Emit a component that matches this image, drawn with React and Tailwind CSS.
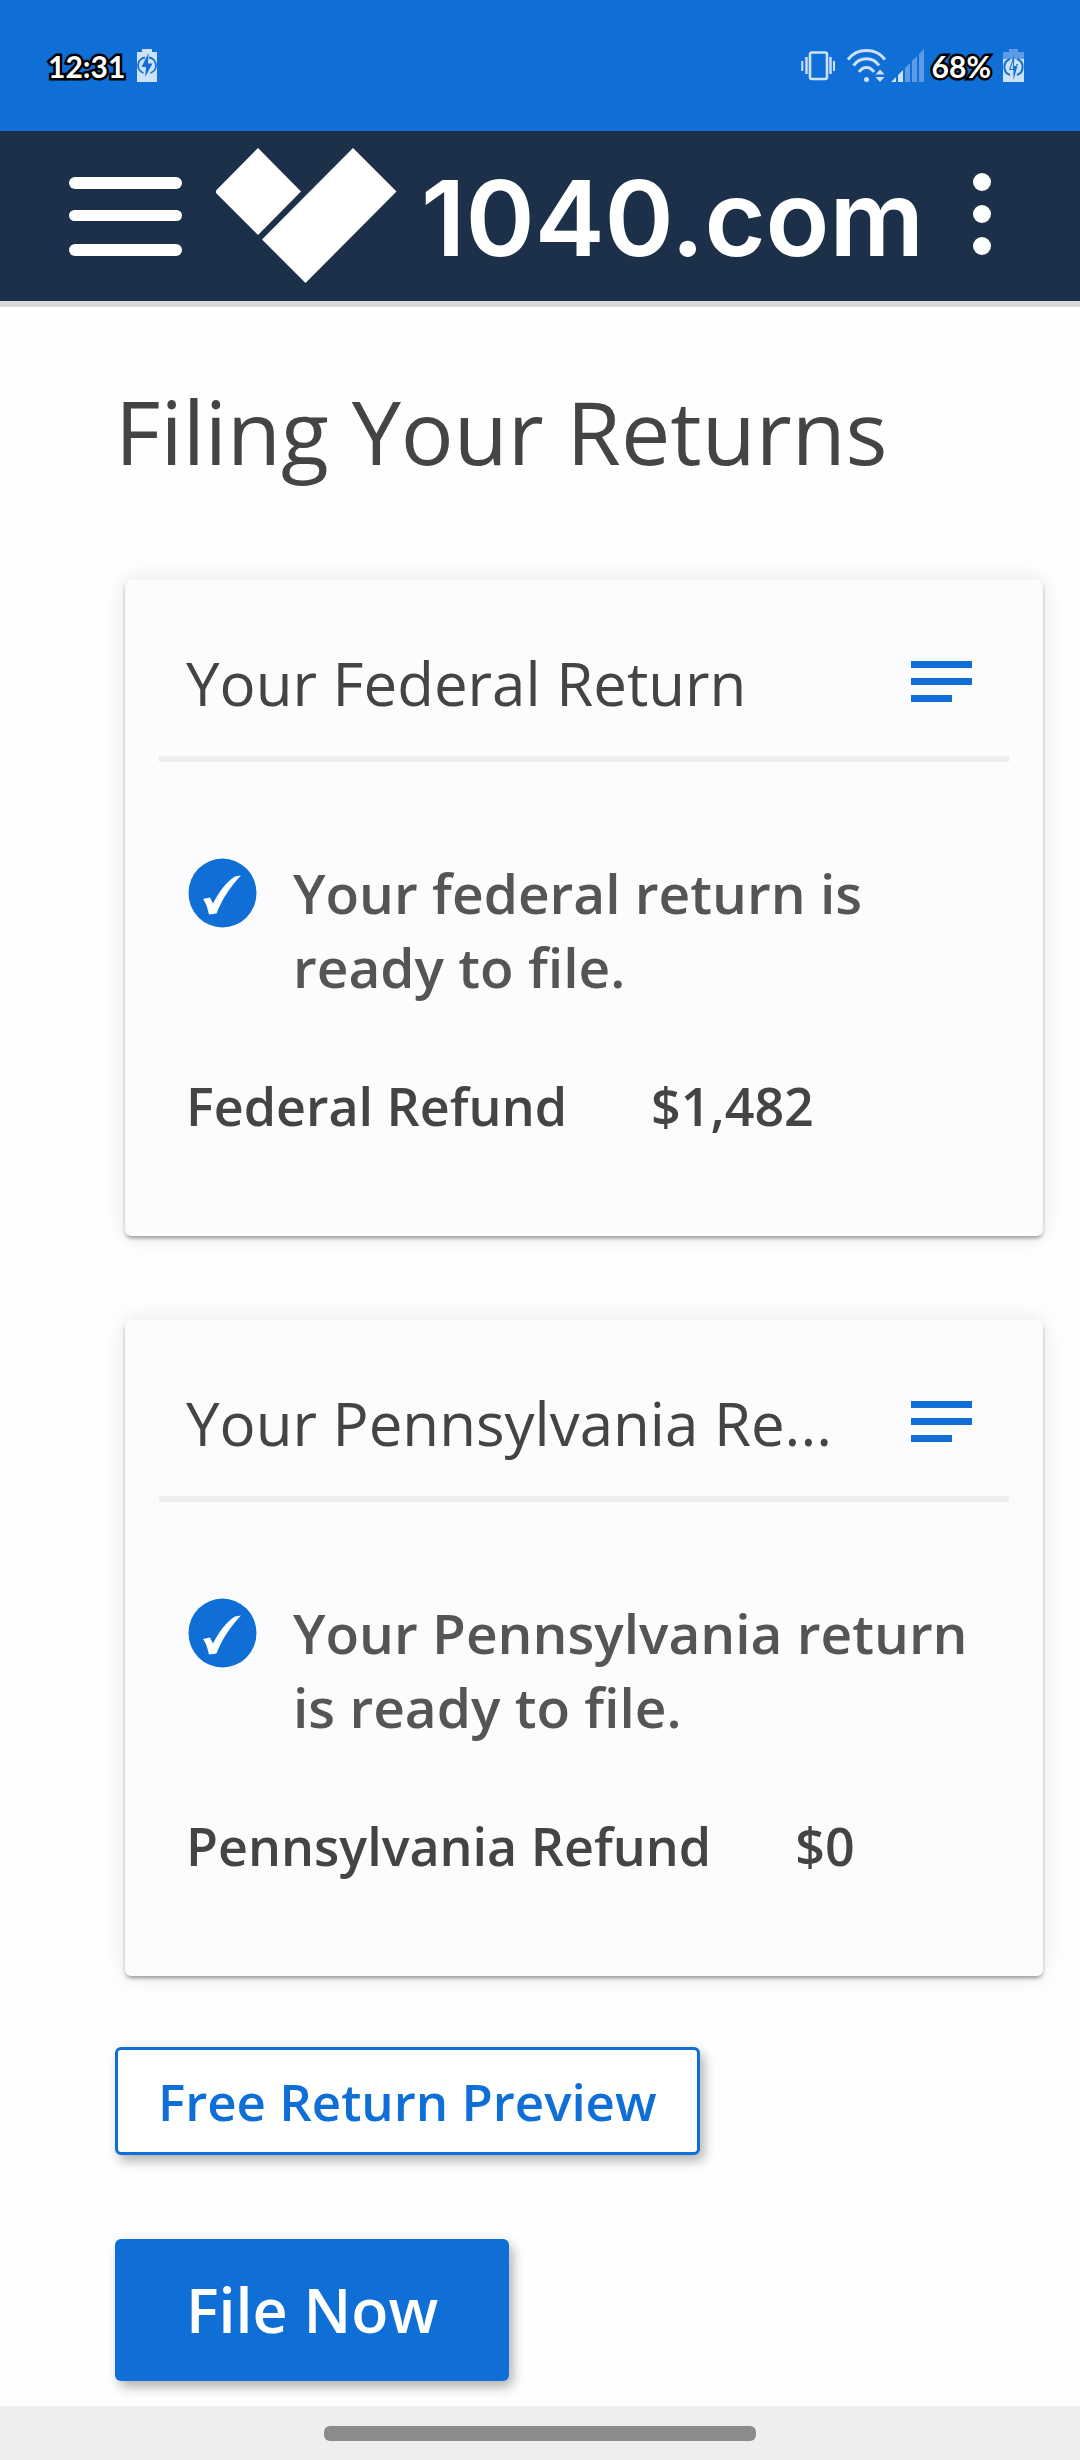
import React from 'react';

const returns = [
  {
    id: 'federal',
    title: 'Your Federal Return',
    message: 'Your federal return is ready to file.',
    label: 'Federal Refund',
    amount: '$1,482',
  },
  {
    id: 'pennsylvania',
    title: 'Your Pennsylvania Re...',
    message: 'Your Pennsylvania return is ready to file.',
    label: 'Pennsylvania Refund',
    amount: '$0',
  },
];

function ChargingIcon() {
  return (
    <svg className="w-5 h-[33px]" viewBox="0 0 20 33" aria-hidden="true">
      <path d="M5 0h10v3h5v30H0V3h5z" fill="#cfe1f7" />
      <path d="M8 8.500A8 8 0 0 0 6.500 24M12 8.500A8 8 0 0 1 13.500 24" fill="none" stroke="#0f6fd7" strokeWidth="1.800" />
      <path d="M11.500 4 4.500 18h4.500l-.8 10L15.500 14.500H11z" fill="#0f6fd7" />
    </svg>
  );
}

function BatteryIcon() {
  return (
    <svg className="w-[21px] h-[33px]" viewBox="0 0 21 33" aria-hidden="true">
      <path d="M6 0h9v3h6v7H0V3h6z" fill="#5c9ce4" />
      <path d="M0 10h21v23H0z" fill="#cfe1f7" />
      <path d="M7 10A8.500 8.500 0 0 0 7 26M14 10a8.500 8.500 0 0 1 0 16" fill="none" stroke="#0f6fd7" strokeWidth="2" />
      <path d="M11 6v9h4l-4.500 16v-10H6z" fill="#0f6fd7" />
      <path d="M11 11v6h3M10 25v-5H7.500L10 12z" fill="#cfe1f7" />
    </svg>
  );
}

function VibrateIcon() {
  return (
    <svg className="w-[34px] h-[30px]" viewBox="0 0 34 30" fill="none" stroke="#cfe1f7" aria-hidden="true">
      <rect x="9" y="1.500" width="17" height="26.500" rx="2" strokeWidth="2.600" />
      <path d="M5.500 6v17M29.500 6v17" strokeWidth="2.400" />
      <path d="M1.300 10v10M33 10v10" strokeWidth="2" />
    </svg>
  );
}

function WifiIcon() {
  return (
    <svg className="w-10 h-[33px]" viewBox="0 0 40 33" fill="none" stroke="#cfe1f7" strokeWidth="3" aria-hidden="true">
      <path d="M1 10.500C10-1.500 29-1.500 38 10.500" />
      <path d="M6.500 16.500C13 7.500 26 7.500 32 16.500" />
      <path d="M12 23C16 17 23 17 27 23" />
      <circle cx="19.500" cy="30.500" r="2.500" fill="#cfe1f7" stroke="none" />
      <path d="M28.500 25.500h9l-4.500-5zM28.500 28h9l-4.500 5z" fill="#cfe1f7" stroke="none" />
    </svg>
  );
}

function SignalIcon() {
  return (
    <svg className="w-[33px] h-[33px]" viewBox="0 0 33 33" aria-hidden="true">
      <path d="M0 33 5 28v5zM7 26l5-5v12H7z" fill="#cfe1f7" />
      <path d="m14 19 5-5v19h-5zM21 12l5-5v26h-5zM28 5l5-5v33h-5z" fill="#5c9ce4" />
    </svg>
  );
}

function Logo() {
  return (
    <svg className="w-[181px] h-[136px] shrink-0" viewBox="0 0 181 136" fill="#fff" aria-hidden="true">
      <path d="M42 0 85 43.500 42 87 0 45v-2.500z" />
      <path d="M137 0 180.500 43.500 89.500 135 46 91.500z" />
    </svg>
  );
}

function CheckIcon() {
  return (
    <svg className="mt-0.5 w-[69px] h-[70px] shrink-0" viewBox="0 0 69 70" aria-hidden="true">
      <ellipse cx="34.500" cy="35" rx="34" ry="34.500" fill="#0f6fd7" />
      <path d="M15 41 22 39.500 25 45.500C31 34 38 24 47 18.500L53 17.500C43 28 34 41 28.500 55.500L21 56.500C19.500 50 18 45 15 41z" fill="#fff" />
    </svg>
  );
}

function ReturnCard({ item }) {
  return (
    <section className="bg-[#fcfcfe] rounded-md shadow-[0_3px_4px_-1px_rgba(0,0,0,0.4),0_0_22px_rgba(0,0,0,0.1)]">
      <div className="mx-[34px] pt-[63px] pb-[33px] pl-[27px] pr-[37px] flex items-center justify-between gap-6 border-b-6 border-[#eee]">
        <h2 className="text-[60px] leading-[80px] text-[#444] truncate">{item.title}</h2>
        <button type="button" aria-label={`${item.title} menu`} className="shrink-0 pb-1">
          <svg className="w-[61px] h-[41px]" viewBox="0 0 61 41" fill="#0f6fd7" aria-hidden="true">
            <path d="M0 0h61v7H0zM0 17h61v7H0zM0 34h41v7H0z" />
          </svg>
        </button>
      </div>
      <div className="pt-[94px] px-[61px] pb-[99px]">
        <div className="flex items-start gap-9 pl-[2px]">
          <CheckIcon />
          <p className="text-[55px] leading-[74px] font-semibold text-[#555]">{item.message}</p>
        </div>
        <dl className="mt-[72px] mb-px flex gap-[84px] text-[52px] leading-[60px] font-semibold text-[#444]">
          <dt>{item.label}</dt>
          <dd>{item.amount}</dd>
        </dl>
      </div>
    </section>
  );
}

export default function App() {
  return (
    <div className="min-h-screen flex flex-col bg-[#fefefe] font-['Open_Sans',sans-serif]">
      {/* Status bar */}
      <div className="h-[131px] px-12 bg-[#0f6fd7] flex items-center justify-between text-white">
        <div className="flex items-center gap-3">
          <span className="font-['Lato',sans-serif] text-[30px] leading-10 font-bold [paint-order:stroke_fill] [-webkit-text-stroke:5px_black]">12:31</span>
          <ChargingIcon />
        </div>
        <div className="flex items-center pr-2">
          <VibrateIcon />
          <span className="ml-3"><WifiIcon /></span>
          <span className="ml-1"><SignalIcon /></span>
          <span className="ml-2 mr-3 font-['Lato',sans-serif] text-[30px] leading-10 font-bold [paint-order:stroke_fill] [-webkit-text-stroke:5px_black]">68%</span>
          <BatteryIcon />
        </div>
      </div>

      {/* Header */}
      <header className="h-44 pl-[69px] pr-[89px] flex items-center bg-[#1d3049] border-b-6 border-[#d8d8d8]">
        <button type="button" aria-label="Menu" className="shrink-0">
          <svg className="w-[113px] h-[79px]" viewBox="0 0 113 79" fill="#fff" aria-hidden="true">
            <rect width="113" height="12" rx="6" />
            <rect y="33" width="113" height="11" rx="5.500" />
            <rect y="67" width="113" height="12" rx="6" />
          </svg>
        </button>
        <a href="#" className="ml-[34px] flex items-center gap-6">
          <Logo />
          <span className="pt-1 font-['Inter',sans-serif] text-[105px] leading-[132px] font-semibold text-white">1040.com</span>
        </a>
        <button type="button" aria-label="More options" className="ml-auto pb-1 shrink-0">
          <svg className="w-[18px] h-[82px]" viewBox="0 0 18 82" fill="#fff" aria-hidden="true">
            <circle cx="9" cy="9" r="9" />
            <circle cx="9" cy="41" r="9" />
            <circle cx="9" cy="73" r="9" />
          </svg>
        </button>
      </header>

      <main className="flex-1 pt-[74px] pb-[25px] pl-[115px] pr-[37px]">
        <h1 className="text-[88px] leading-[100px] text-[#444]">Filing Your Returns</h1>

        <div className="mt-[99px] ml-[10px] flex flex-col gap-[84px]">
          {returns.map(item => <ReturnCard key={item.id} item={item} />)}
        </div>

        <div className="mt-[71px] flex flex-col items-start gap-[84px]">
          <button type="button" className="h-[108px] px-10 bg-white border-3 border-[#0f6fd7] rounded-md text-[51px] leading-[60px] font-semibold text-[#0f6fd7] shadow-[4px_6px_12px_rgba(0,0,0,0.3)]">
            Free Return Preview
          </button>
          <button type="button" className="h-[142px] px-[71px] bg-[#0f6fd7] rounded-md text-[61px] leading-[80px] font-semibold text-white shadow-[4px_6px_12px_rgba(0,0,0,0.3)]">
            File Now
          </button>
        </div>
      </main>

      {/* Gesture bar */}
      <div className="pt-5 pb-[19px] bg-[#eee]">
        <div className="mx-auto w-2/5 h-[15px] rounded-md bg-[#8b8b8b]"></div>
      </div>
    </div>
  );
}
